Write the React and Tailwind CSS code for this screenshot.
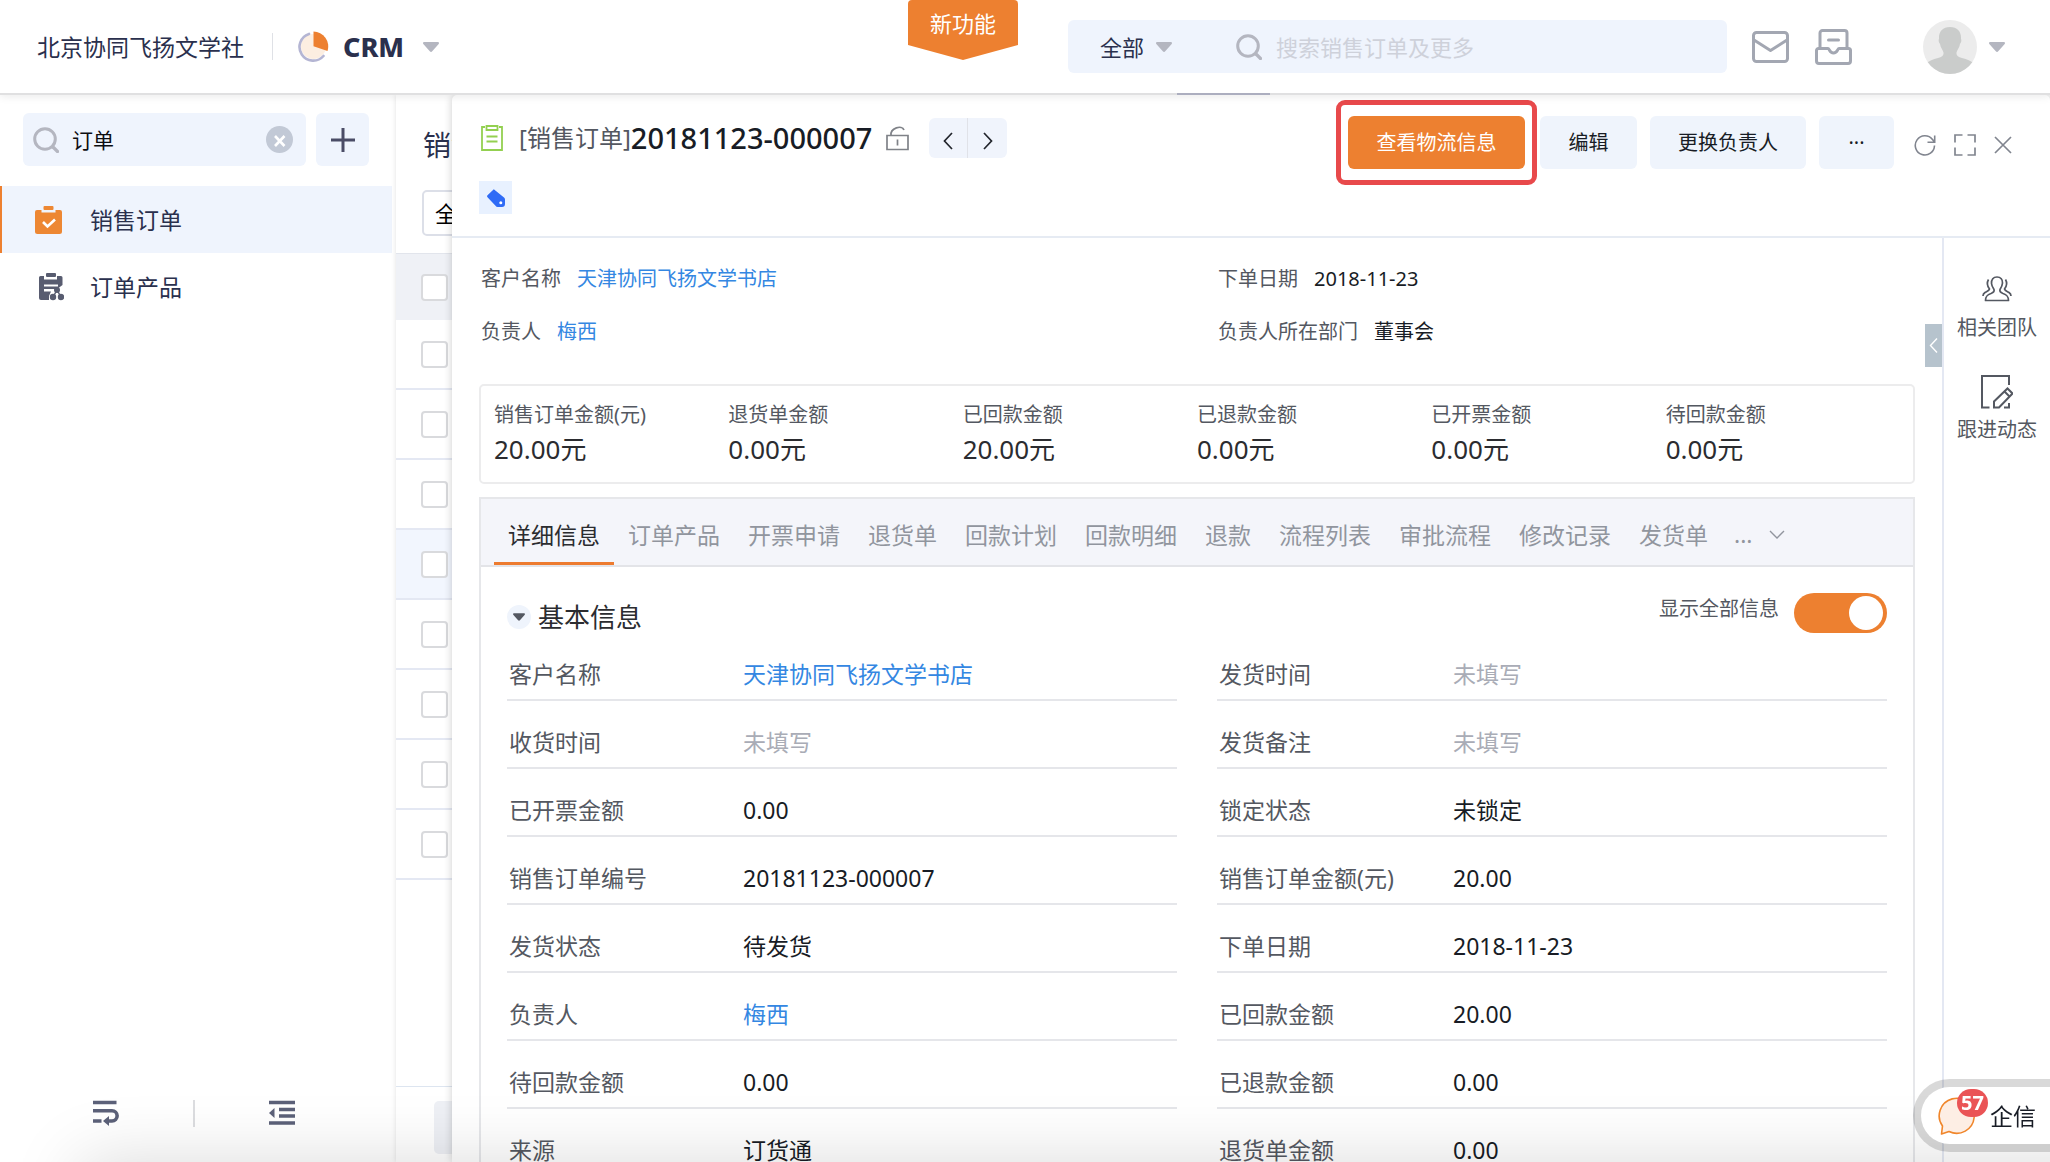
import { useState } from "react";

const metrics = [
  { label: "销售订单金额(元)", value: "20.00元" },
  { label: "退货单金额", value: "0.00元" },
  { label: "已回款金额", value: "20.00元" },
  { label: "已退款金额", value: "0.00元" },
  { label: "已开票金额", value: "0.00元" },
  { label: "待回款金额", value: "0.00元" },
];

const tabs = ["详细信息", "订单产品", "开票申请", "退货单", "回款计划", "回款明细", "退款", "流程列表", "审批流程", "修改记录", "发货单"];

const fields = [
  { label: "客户名称", value: "天津协同飞扬文学书店", link: true },
  { label: "发货时间", value: "" },
  { label: "收货时间", value: "" },
  { label: "发货备注", value: "" },
  { label: "已开票金额", value: "0.00" },
  { label: "锁定状态", value: "未锁定" },
  { label: "销售订单编号", value: "20181123-000007" },
  { label: "销售订单金额(元)", value: "20.00" },
  { label: "发货状态", value: "待发货" },
  { label: "下单日期", value: "2018-11-23" },
  { label: "负责人", value: "梅西", link: true },
  { label: "已回款金额", value: "20.00" },
  { label: "待回款金额", value: "0.00" },
  { label: "已退款金额", value: "0.00" },
  { label: "来源", value: "订货通" },
  { label: "退货单金额", value: "0.00" },
];

const rows = [1, 2, 3, 4, 5, 6, 7, 8];

function Caret({ className }) {
  return (
    <svg viewBox="0 0 16 10" className={className} fill="currentColor" aria-hidden="true">
      <path d="M1.2 0h13.6c1 0 1.5 1.1.9 1.9L9.200 9.300c-.6.8-1.700.8-2.400 0L.3 1.900C-.3 1.100.2 0 1.200 0z" />
    </svg>
  );
}

function SearchIcon({ className }) {
  return (
    <svg viewBox="0 0 26 26" className={className} fill="none" stroke="currentColor" aria-hidden="true">
      <circle cx="12" cy="12" r="10.300" strokeWidth="3" />
      <path d="M20 20l4.500 4.500" strokeWidth="3.200" strokeLinecap="round" />
    </svg>
  );
}

function TopBar() {
  return (
    <header className="flex h-[95px] shrink-0 items-center border-b-2 border-[#e0e0e1] bg-white pl-[37px] pr-[45px] text-[#2a304d]">
      <span className="text-[23px] leading-8">北京协同飞扬文学社</span>
      <span className="ml-[28px] h-[27px] w-px bg-[#dfe1e6]" />
      <svg viewBox="0 0 31 31" className="ml-[25px] size-[31px]" fill="none" aria-hidden="true">
        <circle cx="15.500" cy="15.500" r="12.500" fill="#fceee1" />
        <path d="M11 2.900A13.700 13.700 0 1 0 25.500 25" stroke="#b4b5d3" strokeWidth="2.600" strokeLinecap="round" />
        <path d="M15.500 .5v14.800l14 4.800A15 15 0 0 0 15.500 .5z" fill="#ed8030" />
      </svg>
      <span className="ml-[14px] text-[27px] font-extrabold leading-8">CRM</span>
      <Caret className="ml-[19px] h-[10px] w-4 text-[#b4b6c0]" />

      <button className="ml-auto h-[60px] w-[110px] self-start rounded-[4px] bg-[#ed8030] pb-[14px] text-[22px] leading-8 text-white [clip-path:polygon(0_0,100%_0,100%_75%,50%_100%,0_75%)]">
        新功能
      </button>

      <div className="ml-[50px] flex h-[53px] w-[659px] items-center rounded-[6px] bg-[#eff4fd] pl-8">
        <label className="relative flex items-center">
          <span className="sr-only">搜索范围</span>
          <select className="h-10 w-[72px] appearance-none bg-transparent text-[22px] leading-10 outline-none">
            <option>全部</option>
          </select>
          <Caret className="pointer-events-none absolute right-0 h-[10px] w-4 text-[#b4b6c0]" />
        </label>
        <SearchIcon className="ml-16 size-[26px] text-[#b4b6c0]" />
        <input
          aria-label="搜索"
          placeholder="搜索销售订单及更多"
          className="ml-[14px] min-w-0 flex-1 bg-transparent text-[22px] leading-8 outline-none placeholder:text-[#ced1da]"
        />
      </div>

      <button aria-label="邮件" className="ml-[25px]">
        <svg viewBox="0 0 37 32" className="h-8 w-[37px]" fill="none" stroke="#a3a7b2" strokeWidth="3">
          <rect x="1.500" y="1.500" width="34" height="29" rx="3" />
          <path d="M2 9l16.500 10.500L35 9" strokeLinejoin="round" />
        </svg>
      </button>
      <button aria-label="收件箱" className="ml-[26px]">
        <svg viewBox="0 0 37 36" className="h-9 w-[37px]" fill="none" stroke="#a3a7b2" strokeWidth="3" strokeLinejoin="round">
          <path d="M5 19V4a2.500 2.500 0 0 1 2.500-2.500h22A2.500 2.500 0 0 1 32 4v15" />
          <path d="M13.500 11h10" strokeLinecap="round" />
          <path d="M3.500 19.500h9.500c1.500 0 1.500 4.500 5.500 4.500s4-4.500 5.500-4.500h9.500a2 2 0 0 1 2 2V32a2.500 2.500 0 0 1-2.500 2.500H4A2.500 2.500 0 0 1 1.500 32V21.500a2 2 0 0 1 2-2z" />
        </svg>
      </button>
      <button aria-label="账户" className="ml-[71px] flex items-center gap-3">
        <svg viewBox="0 0 54 54" className="size-[54px] rounded-full bg-[#ececec]">
          <path
            d="M27 7c7.500 0 11.500 5 11 12 .6.500.5 3.500-1 5-.6 4-3 6-3.500 8.500-.4 3 1.500 4.500 5.500 5.500 5 1.200 9 2.500 12 6L45 56H9L3 44c3-3.500 7-4.800 12-6 4-1 5.900-2.500 5.500-5.500C20 30 17.600 28 17 24c-1.500-1.500-1.600-4.500-1-5-.5-7 3.500-12 11-12z"
            fill="#cacccb"
          />
        </svg>
        <Caret className="h-[10px] w-4 text-[#b4b6c0]" />
      </button>
    </header>
  );
}

function Sidebar() {
  const [query, setQuery] = useState("订单");

  return (
    <aside className="flex w-[396px] shrink-0 flex-col bg-white pt-[18px] text-[#2a304d]">
      <div className="flex gap-[10px] pl-[23px] pr-[27px]">
        <div className="flex h-[53px] min-w-0 flex-1 items-center rounded-[6px] bg-[#eff4fd] pl-[10px] pr-[13px]">
          <SearchIcon className="size-[26px] shrink-0 text-[#b4b6c0]" />
          <input
            aria-label="搜索菜单"
            value={query}
            onChange={(e) => setQuery(e.target.value)}
            className="ml-[13px] min-w-0 flex-1 bg-transparent text-[21px] leading-8 text-[#0b0c10] outline-none"
          />
          <button aria-label="清除" className="shrink-0" onClick={() => setQuery("")}>
            <svg viewBox="0 0 27 27" className="size-[27px]">
              <circle cx="13.500" cy="13.500" r="13.500" fill="#c2c9d6" />
              <path d="M9 10l9.500 10M18.500 10L9 20" stroke="#fff" strokeWidth="2.600" />
            </svg>
          </button>
        </div>
        <button aria-label="新建" className="flex size-[53px] shrink-0 items-center justify-center rounded-[6px] bg-[#eff4fd]">
          <svg viewBox="0 0 24 24" className="size-6" stroke="#4a4c66" strokeWidth="3">
            <path d="M12 0v24M0 12h24" />
          </svg>
        </button>
      </div>

      <nav className="mt-5 text-[23px] leading-8">
        <a href="#orders" className="mr-1 flex h-[67px] items-center border-l-2 border-[#ed8030] bg-[#eff4fd] pl-[33px]">
          <svg viewBox="0 0 27 28" className="h-7 w-[27px]" aria-hidden="true">
            <path d="M2 4h4.500v2.500h14V4H25a2 2 0 0 1 2 2v19.500a2.500 2.500 0 0 1-2.500 2.500h-22A2.500 2.500 0 0 1 0 25.500V6a2 2 0 0 1 2-2z" fill="#ed8733" />
            <rect x="8.500" y="0" width="10" height="4" rx="1" fill="#ed8733" />
            <path d="M8 16l4.500 4.500 7.500-7" fill="none" stroke="#fff" strokeWidth="2.600" />
          </svg>
          <span className="ml-7">销售订单</span>
        </a>
        <a href="#products" className="flex h-[67px] items-center pl-[39px]">
          <svg viewBox="0 0 25 28" className="h-7 w-[25px]" aria-hidden="true">
            <path d="M1.500 3H5v3.500h13V3h4a1.500 1.500 0 0 1 1.500 1.500V12l-4 3-3 1H5v2.500h7L10 23v4H2a2 2 0 0 1-2-2V4.500A1.500 1.500 0 0 1 1.500 3z" fill="#585c70" />
            <path d="M5 12.500h14" stroke="#fff" strokeWidth="2" />
            <rect x="7" y="0" width="10" height="4" rx="1" fill="#585c70" />
            <circle cx="18" cy="17" r="3" fill="#585c70" />
            <circle cx="14" cy="24" r="3.200" fill="#585c70" />
            <circle cx="22" cy="24" r="3.200" fill="#585c70" />
            <path d="M18 17l-4 7M18 17l4 7" stroke="#585c70" strokeWidth="1.500" />
          </svg>
          <span className="ml-[26px]">订单产品</span>
        </a>
      </nav>

      <div className="mt-auto flex h-[98px] items-center gap-[74px] pl-[93px] text-[#5c6179]">
        <button aria-label="换行">
          <svg viewBox="0 0 26 26" className="size-[26px]" fill="none" stroke="currentColor" strokeWidth="3.600">
            <path d="M0 2.500h23.500M0 10.700h19a4.700 4.700 0 0 1 0 10.300h-4M0 21h8.500" />
            <path d="M16 16v10l-6-5z" fill="currentColor" stroke="none" />
          </svg>
        </button>
        <span className="h-[27px] w-[2px] bg-[#dcdde0]" />
        <button aria-label="收起菜单">
          <svg viewBox="0 0 26 26" className="size-[26px]" fill="none" stroke="currentColor" strokeWidth="3.600">
            <path d="M0 2.500h26M10 9.500h16M10 16h16M0 23h26" />
            <path d="M5.500 8v10L0 13z" fill="currentColor" stroke="none" />
          </svg>
        </button>
      </div>
    </aside>
  );
}

function Tick({ label }) {
  return (
    <input
      type="checkbox"
      aria-label={label}
      className="size-[27px] shrink-0 appearance-none rounded-[4px] border-2 border-[#d9dadd] bg-white"
    />
  );
}

function OrderList() {
  return (
    <section className="flex h-full flex-col overflow-hidden bg-white shadow-[0_0_5px_rgba(0,0,0,0.12)]">
      <h2 className="mt-[30px] pl-[27px] text-[28px] leading-10 text-[#2a304d]">销售订单</h2>
      <div className="mt-[25px] pl-[26px]">
        <label>
          <span className="sr-only">视图</span>
          <select className="block h-[46px] w-[200px] appearance-none rounded-[5px] border-2 border-[#dcdfe8] bg-white pl-[11px] text-[22px] leading-10 text-black">
            <option>全部</option>
          </select>
        </label>
      </div>
      <div className="mt-[17px] flex h-[67px] shrink-0 items-center border-t border-[#e2e5ec] bg-[#eff1f6] pl-[25px]">
        <Tick label="全选" />
      </div>
      {rows.map((n) => (
        <div key={n} className={`flex h-[70px] shrink-0 items-center border-b-2 border-[#e4e8f3] pl-[25px] ${n === 4 ? "bg-[#f2f6fe]" : ""}`}>
          <Tick label={`选择第 ${n} 行`} />
        </div>
      ))}
      <div className="mt-auto flex h-[76px] shrink-0 border-t border-[#dde5f0] pl-[38px] pt-[14px]">
        <button aria-label="上一页" className="h-[53px] w-[53px] rounded-[5px] bg-[#eef0f5]" />
      </div>
    </section>
  );
}

function DetailHeader() {
  const action = "h-[53px] rounded-[6px] bg-[#eff4fc] text-[20px] leading-8 text-[#181c25]";

  return (
    <div className="flex shrink-0 items-start justify-between border-b-2 border-[#e6ebf3] pb-[22px] pl-[27px] pr-[38px] pt-[5px]">
      <div>
        <div className="mt-[18px] flex h-10 items-center">
          <svg viewBox="0 0 22 26" className="mx-[2px] h-[26px] w-[22px]" fill="none" stroke="#93d050" strokeWidth="1.800" aria-hidden="true">
            <path d="M4 2H1v23h20V2h-3M5.500 1h11v4h-11zM5.500 11.500h11M5.500 16.500h11" />
          </svg>
          <h1 className="ml-[14px] flex items-center text-[#181c25]">
            <span className="text-[24px] leading-9 text-[#545861]">[销售订单]</span>
            <span className="text-[29px] font-medium leading-9">20181123-000007</span>
          </h1>
          <button aria-label="锁定" className="ml-[14px]">
            <svg viewBox="0 0 23 25" className="h-[25px] w-[23px]" fill="none" stroke="#7f8288" strokeWidth="1.700">
              <path d="M1 9.500h21v14H1zM5 9.500C4 2 16-1.500 18 4" />
              <path d="M11.500 13.500v6" />
            </svg>
          </button>
          <div className="ml-5 flex h-10 divide-x divide-[#e0e2e8] overflow-hidden rounded-[6px] bg-[#f0f4fc]">
            <button aria-label="上一条" className="flex w-[39px] items-center justify-center">
              <svg viewBox="0 0 10 18" className="mt-[5px] h-[18px] w-[10px]" fill="none" stroke="#22252c" strokeWidth="1.700">
                <path d="M9 1L1.500 9 9 17" />
              </svg>
            </button>
            <button aria-label="下一条" className="flex w-[39px] items-center justify-center">
              <svg viewBox="0 0 10 18" className="mt-[5px] h-[18px] w-[10px]" fill="none" stroke="#22252c" strokeWidth="1.700">
                <path d="M1 1l7.500 8L1 17" />
              </svg>
            </button>
          </div>
        </div>
        <button aria-label="标签" className="mt-[23px] flex size-[33px] items-center justify-center bg-[#e8f1ff]">
          <svg viewBox="0 0 18 18" className="size-[18px]" aria-hidden="true">
            <path d="M6.800.3L17 8.500a3 3 0 0 1 1 2.500v4a3 3 0 0 1-3 3h-4a3 3 0 0 1-2.500-1.200L.5 8.200a1.500 1.500 0 0 1 0-2z" fill="#2f6bf6" />
            <circle cx="13.800" cy="13.700" r="1.500" fill="#fff" />
          </svg>
        </button>
      </div>

      <div className="flex items-center gap-[13px]">
        <div className="-mr-[10px] rounded-[9px] border-[5px] border-[#e8494b] px-[7px] py-[11px]">
          <button className="h-[53px] w-[177px] rounded-[6px] bg-[#ed8030] text-[20px] leading-8 text-white">查看物流信息</button>
        </div>
        <button className={`${action} w-[97px]`}>编辑</button>
        <button className={`${action} w-[156px]`}>更换负责人</button>
        <button className={`${action} w-[75px]`} aria-label="更多">
          ···
        </button>
        <div className="ml-[7px] flex items-center gap-[18px] pt-[5px] text-[#81858f]">
          <button aria-label="刷新">
            <svg viewBox="0 0 22 22" className="size-[22px]" fill="none" stroke="currentColor" strokeWidth="1.600">
              <path d="M20.500 11.500A9.600 9.600 0 1 1 18.500 5.500L20.500 8M20.700 1.500V8.200H13.500" />
            </svg>
          </button>
          <button aria-label="全屏">
            <svg viewBox="0 0 22 22" className="size-[22px]" fill="none" stroke="currentColor" strokeWidth="1.700">
              <path d="M1 8.500V1h7.500M13.500 1H21v7.500M21 13.500V21h-7.500M8.500 21H1v-7.500" />
            </svg>
          </button>
          <button aria-label="关闭">
            <svg viewBox="0 0 18 18" className="size-[18px]" fill="none" stroke="currentColor" strokeWidth="1.700">
              <path d="M1 1l16 16M17 1L1 17" />
            </svg>
          </button>
        </div>
      </div>
    </div>
  );
}

function SummaryItem({ label, children }) {
  return (
    <div className="flex gap-4">
      <dt className="text-[#545861]">{label}</dt>
      <dd className="text-[#181c25]">{children}</dd>
    </div>
  );
}

function DetailBody() {
  const [activeTab, setActiveTab] = useState("详细信息");
  const [showAll, setShowAll] = useState(true);

  return (
    <div className="flex min-w-0 flex-1 flex-col overflow-hidden pl-[27px] pr-[27px]">
      <dl className="grid shrink-0 grid-cols-2 gap-x-10 gap-y-[21px] pl-[2px] pt-[25px] text-[20px] leading-8">
        <SummaryItem label="客户名称">
          <a href="#customer" className="text-[#3487e2]">天津协同飞扬文学书店</a>
        </SummaryItem>
        <SummaryItem label="下单日期">2018-11-23</SummaryItem>
        <SummaryItem label="负责人">
          <a href="#owner" className="text-[#3487e2]">梅西</a>
        </SummaryItem>
        <SummaryItem label="负责人所在部门">董事会</SummaryItem>
      </dl>

      <dl className="mt-9 grid h-[100px] shrink-0 grid-cols-6 rounded-[5px] border-2 border-[#ececed] px-[13px] pt-[13px]">
        {metrics.map((m) => (
          <div key={m.label}>
            <dt className="text-[20px] leading-8 text-[#545861]">{m.label}</dt>
            <dd className="text-[26px] leading-9 text-[#2b2c30]">{m.value}</dd>
          </div>
        ))}
      </dl>

      <div className="mt-[13px] flex-1 border-2 border-b-0 border-[#e6e7ea]">
        <div className="flex h-[68px] items-stretch border-b-2 border-[#e3e4e8] bg-[#f4f5fa] pl-[13px] text-[23px] leading-8 text-[#91959e]">
          {tabs.map((t) => (
            <button
              key={t}
              onClick={() => setActiveTab(t)}
              className={`whitespace-nowrap border-b-[3px] px-[14px] pt-2 ${activeTab === t ? "border-[#ed7b2f] text-[#2b2c30]" : "border-transparent"}`}
            >
              {t}
            </button>
          ))}
          <button className="flex items-center gap-4 px-[12px] pt-1" aria-label="更多标签">
            <span>...</span>
            <svg viewBox="0 0 16 9" className="h-[9px] w-4" fill="none" stroke="currentColor" strokeWidth="1.400">
              <path d="M1 1l7 7 7-7" />
            </svg>
          </button>
        </div>

        <div className="px-[26px] pt-[26px]">
          <div className="flex h-10 items-start justify-between">
            <h3 className="flex items-center gap-[7px] pt-[6px] text-[26px] leading-9 text-[#2b2c30]">
              <button aria-label="折叠" className="flex size-6 items-center justify-center rounded-full bg-[#eff4fc]">
                <Caret className="h-2 w-3 text-[#545861]" />
              </button>
              基本信息
            </h3>
            <label className="flex items-start gap-[15px] text-[20px] leading-8 text-[#545861]">
              显示全部信息
              <input
                type="checkbox"
                role="switch"
                checked={showAll}
                onChange={(e) => setShowAll(e.target.checked)}
                className="h-10 w-[93px] appearance-none rounded-full bg-gray-300 px-1 py-[3px] before:block before:size-[34px] before:rounded-full before:bg-white checked:bg-[#ed8030] checked:before:ml-auto"
              />
            </label>
          </div>
          <dl className="grid grid-cols-2 gap-x-10 text-[23px] leading-8">
            {fields.map((f, i) => (
              <div key={i} className="flex h-[68px] items-end border-b-2 border-[#e5e6ea] pb-[9px] pl-[2px]">
                <dt className="w-[234px] shrink-0 text-[#545861]">{f.label}</dt>
                <dd className={f.value ? "text-[#181c25]" : "text-[#a9acb6]"}>
                  {f.link ? <a href="#detail" className="text-[#3487e2]">{f.value}</a> : f.value || "未填写"}
                </dd>
              </div>
            ))}
          </dl>
        </div>
      </div>
    </div>
  );
}

function SideRail() {
  return (
    <aside className="relative w-[108px] shrink-0 border-l-2 border-[#e4e8f3] pt-[38px] text-[20px] leading-8 text-[#545861]">
      <button aria-label="展开侧栏" className="absolute right-full top-[86px] mr-[2px] flex h-[43px] w-[17px] items-center justify-center bg-[#b6c3cd]">
        <svg viewBox="0 0 9 15" className="h-[15px] w-[9px]" fill="none" stroke="#fff" strokeWidth="1.400">
          <path d="M8 .5L1.500 7.500 8 14.500" />
        </svg>
      </button>
      <button className="flex w-full flex-col items-center">
        <svg viewBox="0 0 30 26" className="h-[26px] w-[30px]" fill="none" stroke="#545861" strokeWidth="1.700" strokeLinejoin="round">
          <path d="M15 1c3.800 0 5.700 2.600 5.500 6-.2 3-1.500 5-2.500 6.500-.6 1.800.5 3 3 4 3.500 1.200 5.500 2.500 5.500 7h-23c0-4.500 2-5.800 5.500-7 2.500-1 3.600-2.200 3-4-1-1.500-2.300-3.500-2.500-6C9.300 3.600 11.200 1 15 1z" />
          <path d="M6.500 3.500C4.500 7 5.500 10.500 7.500 13c-.5 2-3 2.500-4.500 3.500C1.500 17.500 1 18.500 1 20M23.500 3.500c2 3.500 1 7-1 9.500.5 2 3 2.500 4.500 3.500 1.500 1 2 2 2 3.500" />
        </svg>
        <span className="mt-[10px]">相关团队</span>
      </button>
      <button className="mt-[31px] flex w-full flex-col items-center">
        <svg viewBox="0 0 32 34" className="h-[34px] w-8" fill="none" stroke="#545861" strokeWidth="2">
          <path d="M8.500 32.500H1V1h27v9M23 32.500h5V28" />
          <path d="M13 32.500v-6L26.500 13.500l5 5L18 32.500z" />
          <path d="M23.500 16.500l5 5" />
        </svg>
        <span className="mt-[5px]">跟进动态</span>
      </button>
    </aside>
  );
}

function ChatPill() {
  return (
    <button className="fixed bottom-[10px] right-0 flex h-[73px] w-[137px] items-center rounded-l-full border-8 border-r-0 border-black/15 bg-white bg-clip-padding pl-[17px] text-[23px] leading-8 text-[#181c25]">
      <span className="relative">
        <svg viewBox="0 0 38 38" className="size-[38px]" aria-hidden="true">
          <path d="M3.500 37l1-8A17.500 17.500 0 1 1 11 34.500z" fill="#fdeee4" stroke="#f0862b" strokeWidth="1.600" strokeLinejoin="round" />
        </svg>
        <span className="absolute -top-[8px] left-[19px] flex h-7 w-[31px] items-center justify-center rounded-full bg-[#ea5456] text-[20px] font-bold leading-7 text-white">57</span>
      </span>
      <span className="ml-[14px] whitespace-nowrap">企信</span>
    </button>
  );
}

export default function App() {
  return (
    <div className="flex h-screen flex-col overflow-hidden bg-white [font-family:'Noto_Sans','Noto_Sans_CJK_SC',sans-serif]">
      <div className="relative z-10 shadow-[0_2px_8px_rgba(0,0,0,0.08)]">
        <TopBar />
        <span className="absolute bottom-0 left-[57.4%] h-[2px] w-[93px] bg-[#acaebf]" />
      </div>
      <div className="flex min-h-0 flex-1">
        <Sidebar />
        <main className="relative min-w-0 flex-1">
          <OrderList />
          <article className="absolute inset-y-0 left-14 right-0 flex flex-col overflow-hidden rounded-t-[5px] bg-white shadow-[0_0_8px_rgba(0,0,0,0.2)]">
            <DetailHeader />
            <div className="flex min-h-0 flex-1">
              <DetailBody />
              <SideRail />
            </div>
          </article>
        </main>
      </div>
      <div className="pointer-events-none fixed -right-20 left-20 top-full h-40 shadow-[0_0_70px_rgba(0,0,0,0.15)]" />
      <ChatPill />
    </div>
  );
}
